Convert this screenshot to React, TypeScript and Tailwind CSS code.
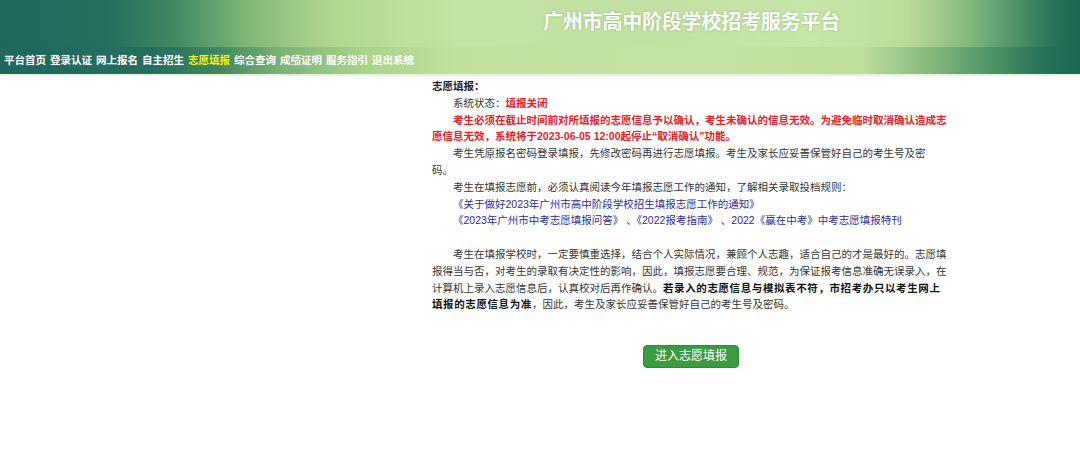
const NAV = ["平台首页", "登录认证", "网上报名", "自主招生", "志愿填报", "综合查询", "成绩证明", "服务指引", "退出系统"];

const ACTIVE = "志愿填报";

export default function App() {
  return (
    <div className="min-h-[465px] bg-white font-['Liberation_Sans','Noto_Sans_CJK_SC',sans-serif] text-[#333]">
      <header className="border-b-2 border-[#e6f3dc]">
        <div className="flex h-[47px] items-start bg-[linear-gradient(90deg,#1d695d_0%,#236f5f_10%,#3f8862_16%,#80b878_23%,#b3d892_31%,#c4e2a3_42%,#c0dfa0_60%,#c7e5a6_75%,#bcdc9c_84%,#8cbd80_89%,#4f9468_94%,#236f57_98%,#1d6a54_100%)] pl-[543px] pt-[9px]">
          <h1 className="text-[20px] font-bold leading-[26px] tracking-[-0.2px] text-white [text-shadow:0_0_2px_rgba(90,140,80,0.6)]">
            广州市高中阶段学校招考服务平台
          </h1>
        </div>
        <nav className="flex h-[27px] items-center gap-[4px] bg-[linear-gradient(90deg,#1f675c_0%,#256e5f_14%,#3f8562_20%,#7cb274_26%,#acd48c_34%,#c0df9f_42%,#c4e2a3_65%,#bddd9c_80%,#86b97c_86%,#4d9265_92%,#246f58_97%,#1e6b55_100%)] pl-[4px]">
          {NAV.map((item) => (
            <a
              key={item}
              href="#"
              className={`text-[10.5px] font-bold leading-none ${item === ACTIVE ? "text-[#f4f400]" : "text-white"}`}
            >
              {item}
            </a>
          ))}
        </nav>
      </header>

      <main className="ml-[432px] mt-[2px] w-[515px] text-[10.5px] leading-[16.8px]">
        <p className="font-bold text-[#222]">志愿填报：</p>
        <p className="indent-[2em]">
          系统状态：<span className="font-bold text-[#e02229]">填报关闭</span>
        </p>
        <p className="indent-[2em] font-bold text-[#e02229]">
          考生必须在截止时间前对所填报的志愿信息予以确认，考生未确认的信息无效。为避免临时取消确认造成志愿信息无效，系统将于2023-06-05 12:00起停止“取消确认”功能。
        </p>
        <p className="indent-[2em]">
          考生凭原报名密码登录填报，先修改密码再进行志愿填报。考生及家长应妥善保管好自己的考生号及密
          <br />
          码。
        </p>
        <p className="indent-[2em]">考生在填报志愿前，必须认真阅读今年填报志愿工作的通知，了解相关录取投档规则：</p>
        <p className="indent-[2em]">
          <a href="#" className="text-[#2c2c95]">《关于做好2023年广州市高中阶段学校招生填报志愿工作的通知》</a>
        </p>
        <p className="indent-[2em]">
          <a href="#" className="text-[#2c2c95]">《2023年广州市中考志愿填报问答》</a>
          {" 、"}
          <a href="#" className="text-[#2c2c95]">《2022报考指南》</a>
          {" 、"}
          <a href="#" className="text-[#2c2c95]">2022《赢在中考》中考志愿填报特刊</a>
        </p>
        <p className="mt-[16.8px] indent-[2em]">
          考生在填报学校时，一定要慎重选择，结合个人实际情况，兼顾个人志趣，适合自己的才是最好的。志愿填报得当与否，对考生的录取有决定性的影响，因此，填报志愿要合理、规范，为保证报考信息准确无误录入，在计算机上录入志愿信息后，认真校对后再作确认。
          <b className="tracking-[0.6px] text-[#111]">若录入的志愿信息与模拟表不符，市招考办只以考生网上填报的志愿信息为准</b>
          ，因此，考生及家长应妥善保管好自己的考生号及密码。
        </p>

        <div className="mt-[32px] flex justify-center pl-[3px]">
          <button className="h-[23px] w-[96px] rounded-[4px] border border-[#2e8a35] bg-[#3a9b40] text-[12px] text-white">
            进入志愿填报
          </button>
        </div>
      </main>
    </div>
  );
}
